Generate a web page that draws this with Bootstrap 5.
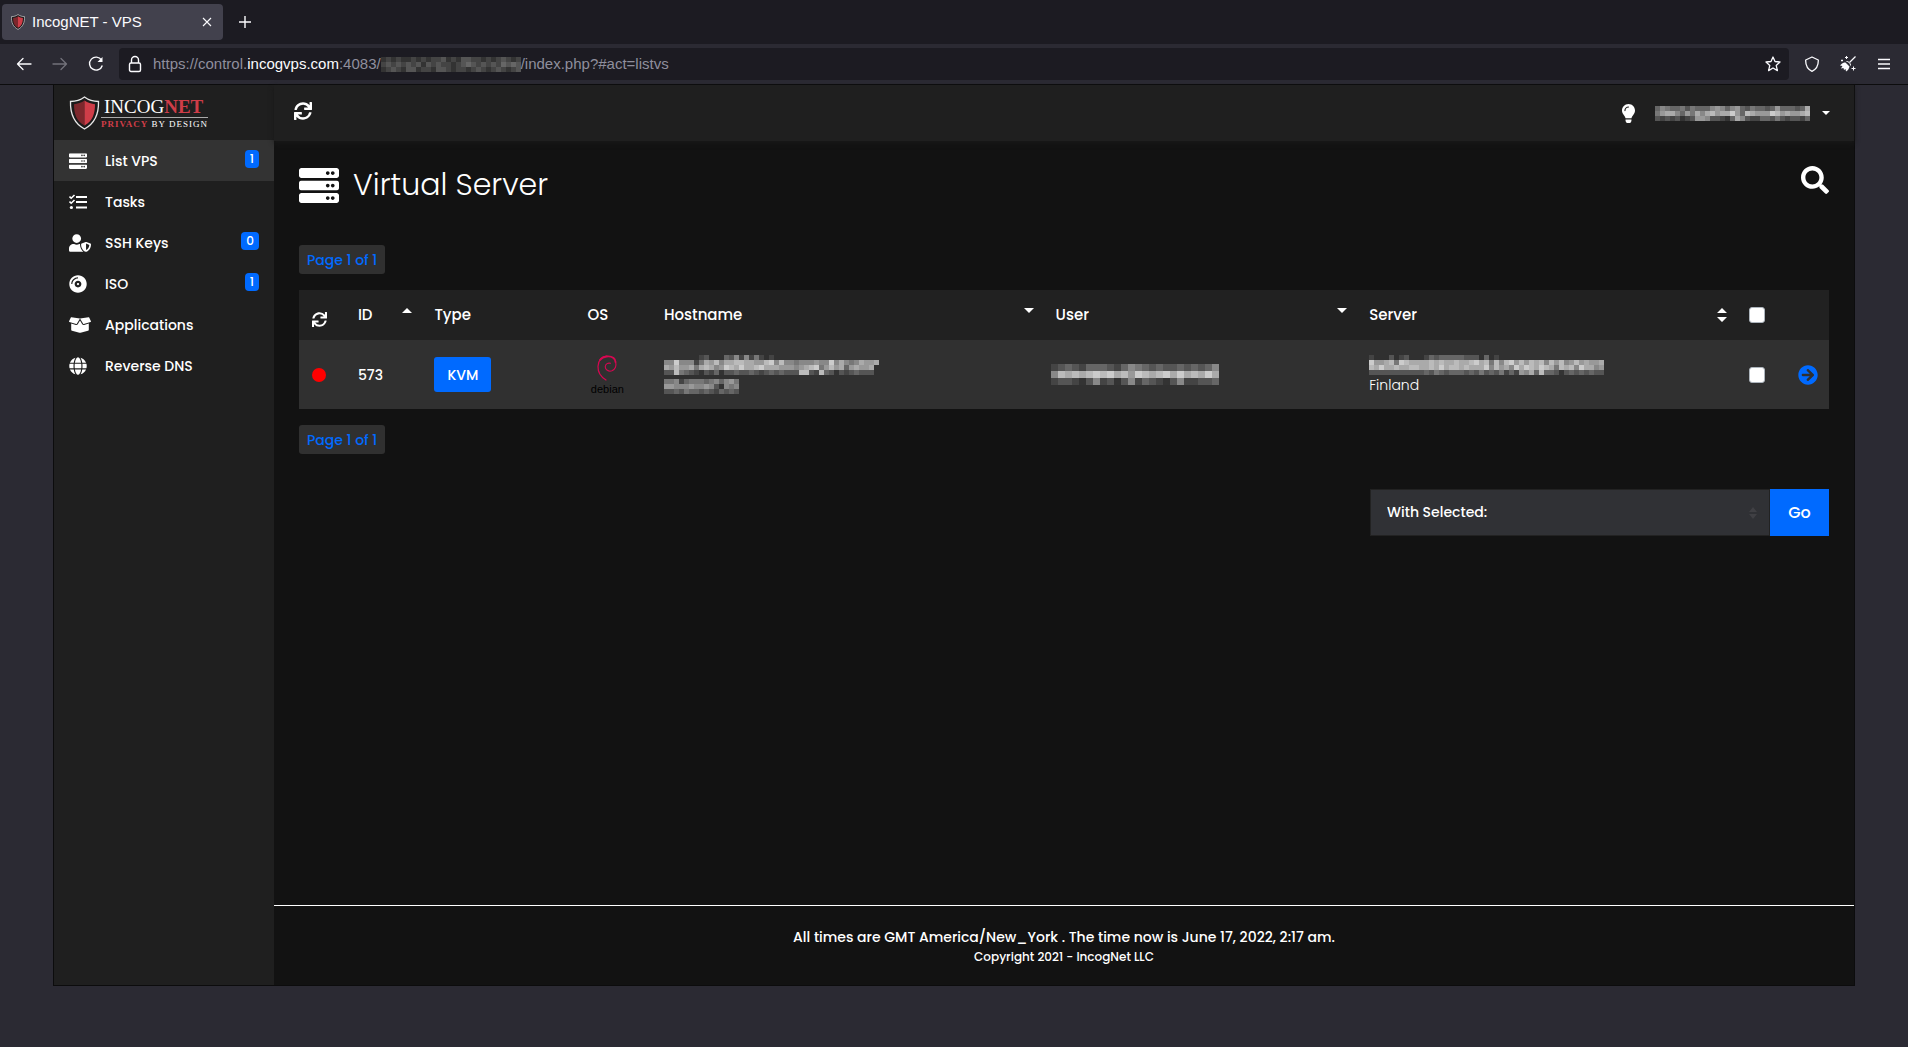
<!DOCTYPE html>
<html lang="en">
<head>
<meta charset="utf-8">
<meta name="viewport" content="width=device-width, initial-scale=1">
<title>IncogNET - VPS</title>
<link rel="stylesheet" href="https://cdn.jsdelivr.net/npm/bootstrap@5.3.0/dist/css/bootstrap.min.css">
<style>
:root { --accent: #006aff; --chrome: #2b2a33; --chrome-dark: #1c1b22; }
body { background: var(--chrome); color: #fff; font-family: Poppins, Inter, sans-serif; font-size: 14px; font-weight: 500; line-height: 20px; }
button { color: inherit; font-weight: inherit; }
svg { display: block; flex: none; }
.icon-btn { background: none; border: 0; padding: 0; display: block; color: inherit; }

/* browser frame */
.browser-ui { font-family: "Liberation Sans", Arial, sans-serif; font-size: 15px; font-weight: 400; color: #fbfbfe; }
.tab-strip { background: var(--chrome-dark); height: 44px; padding-left: 2px; }
.browser-tab { background: #42414d; width: 221px; height: 36px; border-radius: 4px; padding: 0 11px 0 9px; gap: 7px; }
.toolbar { height: 41px; padding: 0 16px; border-bottom: 1px solid #0c0c0d; }
.nav-keys { gap: 20px; width: 103px; }
.url-box { background: var(--chrome-dark); height: 32px; border-radius: 4px; padding: 0 8px 0 9px; }
.url-text { color: #8f8f9d; margin-left: 11px; }
.url-text b { color: #fbfbfe; font-weight: 400; }
.tool-keys { gap: 20px; margin-left: 15px; }

/* application frame */
.app { margin: 0 53px 61px; border: 1px solid #0c0c0d; border-top: 0; background: #121212; }
.side { width: 220px; background: #1f1f1f; }
.brand { height: 55px; padding: 11px 15px 0; gap: 1px; font-family: "Liberation Serif", serif; color: #fff; text-decoration: none; }
.brand-name { font-size: 19px; line-height: 21px; padding-left: 3px; font-weight: 400; border-bottom: 1px solid #aaa; }
.brand-name b, .brand-tag b { color: #cf3d48; }
.brand-tag { font-size: 9px; line-height: 13px; letter-spacing: 1px; font-weight: 400; white-space: nowrap; }
.side-link { height: 41px; padding: 0 15px; color: #fff; text-decoration: none; }
.side-link.active { background: #333; }
.side-icon { width: 36px; }
.side-link .badge { background: var(--accent); font-size: 12px; line-height: 12px; font-weight: 500; padding: 3px 5px; border-radius: 4px; margin-bottom: 4px; }
.topbar { height: 56px; background: #1f1f1f; box-shadow: 0 2px 5px #191919; padding: 0 24px 0 20px; gap: 20px; }
.account { gap: 12px; }
.page-area { padding: 25px 25px 0; }
h1 { font-size: 30px; font-weight: 300; line-height: 38px; gap: 14px; }
.page-pill { background: #303030; color: var(--accent); border: 0; border-radius: 3px; height: 29px; padding: 0 8px; }
.page-head { margin-bottom: 41px; }
.vps { margin: 16px 0; table-layout: fixed; width: 100%; }
.vps th { background: #212121; height: 50px; padding: 0 9px 0 13px; font-weight: 500; font-size: 15px; }
.vps td { background: #303030; height: 69px; padding: 0 8px 0 13px; }
.sort { width: 10px; height: 16px; fill: #fff; }
.kvm { background: var(--accent); border-radius: 3px; border: 0; height: 35px; padding: 0 13px; }
.dot { width: 14px; height: 14px; border-radius: 50%; background: red; }
.distro { width: 40px; font: 11px/12px "Liberation Sans", sans-serif; color: #000; }
.place { font-weight: 300; line-height: 20px; }
.form-check-input.tick { display: block; float: none; width: 16px; height: 16px; margin: 0; background-color: #fff; border: 1px solid #adb5bd; border-radius: 3px; }
.bulk { width: 459px; margin-top: 35px; }
.bulk .form-select { height: 47px; background-color: #303135; border: 1px solid #222; color: #fff; font-size: 14px; font-weight: 500; padding: 0 16px; background-position: right 12px center; background-size: 8px 12px; background-image: url("data:image/svg+xml,%3Csvg xmlns='http://www.w3.org/2000/svg' viewBox='0 0 8 12'%3E%3Cpath fill='%23404044' d='M0 5l4-5 4 5zM0 7h8l-4 5z'/%3E%3C/svg%3E"); }
.go { flex: 0 0 59px; background: var(--accent); border: 0; font-size: 16px; }
.foot { border-top: 1px solid #fff; height: 80px; padding-top: 21px; }
.foot .fine { font-size: 12px; }
.foot .clock { font-size: 14px; }
</style>
<script src="https://cdn.jsdelivr.net/npm/bootstrap@5.3.0/dist/js/bootstrap.bundle.min.js"></script>
</head>
<body class="min-vh-100 d-flex flex-column">

<svg width="0" height="0" class="position-absolute" aria-hidden="true">
  <symbol id="sync" viewBox="0 0 512 512"><path d="M440.65 12.57l4 82.77A247.16 247.16 0 0 0 255.83 8C134.73 8 33.91 94.92 12.29 209.82A12 12 0 0 0 24.09 224h49.05a12 12 0 0 0 11.67-9.26 175.91 175.91 0 0 1 317-56.94l-101.46-4.86a12 12 0 0 0-12.57 12v47.41a12 12 0 0 0 12 12H500a12 12 0 0 0 12-12V12a12 12 0 0 0-12-12h-47.37a12 12 0 0 0-11.98 12.57zM255.83 432a175.61 175.61 0 0 1-146-77.8l101.8 4.87a12 12 0 0 0 12.57-12v-47.4a12 12 0 0 0-12-12H12a12 12 0 0 0-12 12V500a12 12 0 0 0 12 12h47.35a12 12 0 0 0 12-12.6l-4.15-82.57A247.17 247.17 0 0 0 255.83 504c121.11 0 221.93-86.92 243.55-201.82a12 12 0 0 0-11.8-14.18h-49.05a12 12 0 0 0-11.67 9.26A175.86 175.86 0 0 1 255.83 432z"/></symbol>
  <symbol id="unit" viewBox="0 0 512 128"><path d="M480 128H32c-17.673 0-32-14.327-32-32V32C0 14.327 14.327 0 32 0h448c17.673 0 32 14.327 32 32v64c0 17.673-14.327 32-32 32zm-48-88c-13.255 0-24 10.745-24 24s10.745 24 24 24 24-10.745 24-24-10.745-24-24-24zm-64 0c-13.255 0-24 10.745-24 24s10.745 24 24 24 24-10.745 24-24-10.745-24-24-24z"/></symbol>
  <symbol id="server" viewBox="0 0 512 448"><use href="#unit" width="512" height="128"/><use href="#unit" y="160" width="512" height="128"/><use href="#unit" y="320" width="512" height="128"/></symbol>
  <symbol id="shield" viewBox="0 0 30 34"><path d="M15 1C11 4 6 5.500 1 5.500C.6 18 4 27 15 33C26 27 29.400 18 29 5.500C24 5.500 19 4 15 1Z" fill="#1b1b1b" stroke="#e8e8e8" stroke-width="1.300"/><path d="M15 4.500C12 6.700 8 8 4.500 8.200C4.500 18 7 25 15 29.500Z" fill="#7d272c"/><path d="M15 4.500C18 6.700 22 8 25.500 8.200C25.500 18 23 25 15 29.500Z" fill="#cf3d48"/></symbol>
</svg>

<header class="browser-ui">
  <div class="tab-strip d-flex align-items-center">
    <div class="browser-tab d-flex align-items-center">
      <svg width="14" height="16"><use href="#shield"/></svg>
      <span class="flex-grow-1">IncogNET - VPS</span>
      <button class="icon-btn" aria-label="Close tab"><svg width="10" height="10" viewBox="0 0 10 10" stroke="currentColor" stroke-width="1.100"><path d="M1 1l8 8M9 1L1 9"/></svg></button>
    </div>
    <button class="icon-btn ms-3" aria-label="New tab"><svg width="12" height="12" viewBox="0 0 12 12" stroke="currentColor" stroke-width="1.400"><path d="M6 0v12M0 6h12"/></svg></button>
  </div>
  <div class="toolbar d-flex align-items-center">
    <div class="nav-keys d-flex align-items-center">
      <button class="icon-btn" aria-label="Back"><svg width="16" height="14" viewBox="0 0 16 14" fill="none" stroke="currentColor" stroke-width="1.300" stroke-linecap="round" stroke-linejoin="round"><path d="M15 7H1.500M7 1.500L1.500 7L7 12.500"/></svg></button>
      <button class="icon-btn" aria-label="Forward"><svg width="16" height="14" viewBox="0 0 16 14" fill="none" stroke="#73727b" stroke-width="1.300" stroke-linecap="round" stroke-linejoin="round"><path d="M1 7h13.500M9 1.500L14.500 7L9 12.500"/></svg></button>
      <button class="icon-btn" aria-label="Reload"><svg width="16" height="16" viewBox="0 0 16 16" fill="none" stroke="currentColor" stroke-width="1.400"><path d="M13.500 4A6.500 6.500 0 1 0 14.300 9.500"/><path d="M14.500 1v5h-5z" fill="currentColor" stroke="none"/></svg></button>
    </div>
    <div class="url-box d-flex align-items-center flex-grow-1">
      <svg width="14" height="18" viewBox="0 0 14 18" fill="none" stroke="currentColor" stroke-width="1.400"><rect x="1.500" y="8" width="11" height="8.500" rx="1.500"/><path d="M3.500 8V5a3.500 3.500 0 0 1 7 0v3"/></svg>
      <span class="url-text d-flex align-items-center flex-grow-1"><span>https://control.<b>incogvps.com</b>:4083/</span><svg class="mosaic" data-cell="5" data-rows="3434334343445343554434345434 4545454535454434565454546565 3454355344355434434543454345"></svg><span>/index.php?#act=listvs</span></span>
      <button class="icon-btn" aria-label="Bookmark"><svg width="16" height="16" viewBox="0 0 16 16" fill="none" stroke="currentColor" stroke-width="1.300" stroke-linejoin="round"><path d="M8 1l2 4.500l5 .5l-3.800 3.400l1.200 5.200L8 12l-4.400 2.600l1.200-5.200L1 6l5-.500z"/></svg></button>
    </div>
    <div class="tool-keys d-flex align-items-center">
      <button class="icon-btn" aria-label="Shield"><svg width="16" height="16" viewBox="0 0 16 16" fill="none" stroke="currentColor" stroke-width="1.300" stroke-linejoin="round"><path d="M8 1L14.300 4C14.500 9 13 13 8 15.300C3 13 1.500 9 1.700 4Z"/></svg></button>
      <button class="icon-btn" aria-label="Clean"><svg width="16" height="16" viewBox="0 0 16 16"><path d="M15.500.500L9.500 6.500" stroke="currentColor" stroke-width="1.300"/><path d="M6.500 5.500C8 5 11 7.500 10.500 9.500" stroke="currentColor" fill="none"/><path d="M5.500 6.500L9.500 10.500C9 13 7.500 15 6 15.500L5.500 13L4 14L3.500 12L1 12.500L2.500 10L0 9.500C2 7 4 6.500 5.500 6.500Z" fill="currentColor"/><path d="M6.500 0v3M5 1.500h3M13.500 10.500v4M11.500 12.500h4M2 3.500v2M1 4.500h2" stroke="currentColor"/></svg></button>
      <button class="icon-btn" aria-label="Menu"><svg width="16" height="16" viewBox="0 0 16 16" stroke="currentColor" stroke-width="1.300"><path d="M2 3.500h12M2 8h12M2 12.500h12"/></svg></button>
    </div>
  </div>
</header>

<div class="app d-flex flex-grow-1">
  <aside class="side flex-shrink-0">
    <a class="brand d-flex" href="#">
      <svg width="31" height="34"><use href="#shield" width="31" height="34"/></svg>
      <span><span class="brand-name d-block">INCOG<b>NET</b></span><span class="brand-tag d-block"><b>PRIVACY</b> BY DESIGN</span></span>
    </a>
    <nav class="nav flex-column flex-nowrap">
      <a class="side-link active d-flex align-items-center" href="#"><span class="side-icon"><svg width="18" height="16" fill="#fff"><use href="#server"/></svg></span><span class="flex-grow-1">List VPS</span><span class="badge">1</span></a>
      <a class="side-link d-flex align-items-center" href="#"><span class="side-icon"><svg width="18" height="16" viewBox="0 0 18 16" fill="none" stroke="#fff"><path d="M7 3h11M7 8h11M7 13.500h11" stroke-width="2"/><path d="M.5 2.500l1.700 1.700L5.500 1M.5 7.500l1.700 1.700L5.500 6" stroke-width="1.600"/><circle cx="2.400" cy="13.500" r="1.600" fill="#fff" stroke="none"/></svg></span><span>Tasks</span></a>
      <a class="side-link d-flex align-items-center" href="#"><span class="side-icon"><svg width="22" height="18" viewBox="0 0 640 512" fill="#fff"><path d="M622.300 271.100l-115.200-45c-4.100-1.600-12.600-3.700-22.200 0l-115.200 45c-10.700 4.200-17.700 14-17.700 24.900 0 111.600 68.700 188.800 132.900 213.900 9.600 3.700 18 1.600 22.200 0C558.400 489.900 640 420.500 640 296c0-10.900-7-20.700-17.700-24.900zM496 462.400V273.300l95.500 37.300c-5.600 87.100-60.900 135.400-95.500 151.800zM224 256c70.700 0 128-57.300 128-128S294.700 0 224 0 96 57.300 96 128s57.300 128 128 128zm96 40c0-2.500.8-4.800 1.100-7.200-2.500-.1-4.900-.8-7.500-.8h-16.700c-22.200 10.200-46.900 16-72.900 16s-50.600-5.800-72.900-16h-16.700C60.200 288 0 348.200 0 422.400V464c0 26.500 21.500 48 48 48h352c6.800 0 13.300-1.500 19.200-4-54-42.900-99.200-116.700-99.200-212z"/></svg></span><span class="flex-grow-1">SSH Keys</span><span class="badge">0</span></a>
      <a class="side-link d-flex align-items-center" href="#"><span class="side-icon"><svg width="18" height="18" viewBox="0 0 496 512" fill="#fff"><path d="M248 8C111 8 0 119 0 256s111 248 248 248 248-111 248-248S385 8 248 8zM88 256H56c0-105.900 86.100-192 192-192v32c-88.200 0-160 71.800-160 160zm160 96c-53 0-96-43-96-96s43-96 96-96 96 43 96 96-43 96-96 96zm0-128c-17.700 0-32 14.300-32 32s14.300 32 32 32 32-14.300 32-32-14.300-32-32-32z"/></svg></span><span class="flex-grow-1">ISO</span><span class="badge">1</span></a>
      <a class="side-link d-flex align-items-center" href="#"><span class="side-icon"><svg width="22" height="18" viewBox="0 0 640 512" fill="#fff"><path d="M425.700 256c-16.900 0-32.800-9-41.400-23.400L320 126l-64.200 106.600c-8.700 14.500-24.600 23.500-41.500 23.500-4.500 0-9-.6-13.300-1.900L64 215v178c0 14.700 10 27.500 24.200 31l216.200 54.100c10.200 2.500 20.900 2.500 31 0L551.800 424c14.200-3.600 24.200-16.400 24.200-31V215l-137 39.100c-4.300 1.300-8.800 1.900-13.300 1.900zm212.600-112.200L586.800 41c-3.100-6.200-9.800-9.800-16.700-8.900L320 64l91.700 152.100c3.800 6.300 11.400 9.300 18.500 7.300l197.900-56.500c9.900-2.900 14.700-13.900 10.200-23.100zM53.200 41L1.700 143.800c-4.600 9.200.3 20.200 10.100 23l197.900 56.500c7.100 2 14.700-1 18.500-7.300L320 64 69.800 32.100c-6.900-.8-13.500 2.700-16.600 8.900z"/></svg></span><span>Applications</span></a>
      <a class="side-link d-flex align-items-center" href="#"><span class="side-icon"><svg width="18" height="18" viewBox="0 0 496 512" fill="#fff"><path d="M336.500 160C322 70.700 287.800 8 248 8s-74 62.700-88.500 152h177zM152 256c0 22.200 1.200 43.500 3.300 64h185.300c2.100-20.500 3.300-41.800 3.300-64s-1.200-43.500-3.300-64H155.300c-2.100 20.500-3.300 41.800-3.300 64zm324.700-96c-28.600-67.900-86.500-120.400-158-141.600 24.400 33.800 41.200 84.700 50 141.600h108zM177.200 18.400C105.800 39.600 47.800 92.100 19.300 160h108c8.700-56.900 25.500-107.800 49.900-141.600zM487.400 192H372.700c2.100 21 3.300 42.500 3.300 64s-1.200 43-3.300 64h114.600c5.500-20.500 8.600-41.800 8.600-64s-3.100-43.500-8.500-64zM120 256c0-21.500 1.200-43 3.300-64H8.600C3.200 212.500 0 233.800 0 256s3.200 43.500 8.600 64h114.600c-2-21-3.200-42.500-3.200-64zm39.500 96c14.500 89.300 48.700 152 88.500 152s74-62.700 88.500-152h-177zm159.300 141.600c71.400-21.200 129.400-73.700 158-141.600h-108c-8.800 56.900-25.600 107.800-50 141.600zM19.300 352c28.600 67.900 86.500 120.400 158 141.600-24.400-33.800-41.200-84.700-50-141.600h-108z"/></svg></span><span>Reverse DNS</span></a>
    </nav>
  </aside>

  <div class="d-flex flex-column flex-grow-1">
    <div class="topbar d-flex align-items-center">
      <button class="icon-btn me-auto pb-1" aria-label="Refresh"><svg width="18" height="18" fill="#fff"><use href="#sync"/></svg></button>
      <button class="icon-btn" aria-label="Theme"><svg width="13" height="19" viewBox="0 0 352 512" fill="#fff"><path d="M96.060 454.350c.01 6.290 1.870 12.450 5.360 17.690l17.090 25.690a31.990 31.990 0 0 0 26.640 14.280h61.710a31.990 31.990 0 0 0 26.640-14.280l17.090-25.690a31.989 31.989 0 0 0 5.360-17.690l.04-38.350H96.010l.05 38.350zM0 176c0 44.370 16.450 84.850 43.560 115.780 16.520 18.850 42.360 58.230 52.210 91.450.04.26.07.52.11.78h160.240c.04-.26.07-.51.11-.78 9.850-33.220 35.690-72.600 52.210-91.450C335.550 260.850 352 220.370 352 176 352 78.610 272.910-.3 175.450 0 73.440.31 0 82.970 0 176zm176-80c-44.110 0-80 35.890-80 80 0 8.840-7.160 16-16 16s-16-7.160-16-16c0-61.760 50.240-112 112-112 8.840 0 16 7.160 16 16s-7.160 16-16 16z"/></svg></button>
      <button class="account icon-btn d-flex align-items-center" aria-label="Account"><svg class="mosaic" data-cell="5" data-rows="687667576668986896576656966656a 79aa8697a8ab9aac96ba999cb9a99ab 5454534599855436a85446657545546"></svg><svg width="8" height="5" viewBox="0 0 8 5" fill="#fff"><path d="M0 0h8L4 4z"/></svg></button>
    </div>

    <main class="page-area flex-grow-1">
      <div class="page-head d-flex align-items-start">
        <h1 class="d-flex align-items-center mb-0 me-auto"><svg width="40" height="35" fill="#fff"><use href="#server"/></svg>Virtual Server</h1>
        <button class="icon-btn" aria-label="Search"><svg width="28" height="28" viewBox="0 0 512 512" fill="#fff"><path d="M505 442.700L405.300 343c-4.500-4.500-10.600-7-17-7H372c27.600-35.300 44-79.700 44-128C416 93.100 322.900 0 208 0S0 93.100 0 208s93.100 208 208 208c48.300 0 92.700-16.400 128-44v16.300c0 6.400 2.500 12.500 7 17l99.700 99.700c9.400 9.400 24.600 9.400 33.900 0l28.300-28.300c9.400-9.400 9.400-24.600.1-34zM208 336c-70.700 0-128-57.200-128-128 0-70.700 57.200-128 128-128 70.700 0 128 57.200 128 128 0 70.700-57.200 128-128 128z"/></svg></button>
      </div>
      <button class="page-pill d-block">Page 1 of 1</button>

      <table class="vps align-middle">
        <colgroup><col style="width:3%"><col style="width:5%"><col style="width:10%"><col style="width:5%"><col style="width:25.6%"><col style="width:20.5%"><col style="width:24.8%"><col style="width:3.2%"><col style="width:2.9%"></colgroup>
        <thead>
          <tr>
            <th scope="col"><button class="icon-btn pt-2" aria-label="Reload list"><svg width="15" height="15" fill="#fff"><use href="#sync"/></svg></button></th>
            <th scope="col"><span class="d-flex align-items-center justify-content-between">ID<svg class="sort" viewBox="0 0 10 16"><path d="M0 6l5-5 5 5z"/></svg></span></th>
            <th scope="col">Type</th>
            <th scope="col">OS</th>
            <th scope="col"><span class="d-flex align-items-center justify-content-between">Hostname<svg class="sort" viewBox="0 0 10 16"><path d="M0 1h10L5 6z"/></svg></span></th>
            <th scope="col"><span class="d-flex align-items-center justify-content-between">User<svg class="sort" viewBox="0 0 10 16"><path d="M0 1h10L5 6z"/></svg></span></th>
            <th scope="col"><span class="d-flex align-items-center justify-content-between">Server<svg class="sort" viewBox="0 0 10 16"><path d="M0 6l5-5 5 5zM0 10h10l-5 5z"/></svg></span></th>
            <th scope="col"><input class="form-check-input tick" type="checkbox" aria-label="Select all"></th>
            <th></th>
          </tr>
        </thead>
        <tbody>
          <tr>
            <td><div class="dot"></div></td>
            <td>573</td>
            <td><button class="kvm">KVM</button></td>
            <td><div class="distro d-flex flex-column align-items-center"><svg width="20" height="28" viewBox="0 0 20 28" fill="none" stroke="#d70751" stroke-linecap="round"><path d="M9 25C4 22 .8 17 1 11.500C1.200 5 5 1.200 10 1.200" stroke-width="1.200"/><path d="M3 5C6 1 13 .3 16.500 3C18 4.200 18.500 5 18.500 7" stroke-width="1.900"/><path d="M18.500 7C19.800 11 18 14.500 15 15.800C11.500 17.200 8 14.500 8.300 11.500C8.600 8.800 11 7.600 13.500 8.300" stroke-width="1.100"/></svg><span>debian</span></div></td>
            <td><svg class="mosaic mb-1" data-cell="5" data-rows=".......45...65848474.4.................... 88c88847a9b8aabbaa99bc8b887888988c8a878a99a a9b99a7aba89cbacaabcaaa99989abc79b9a69a99a 55b765435463556556545656555bb54b6535456555"></svg><svg class="mosaic" data-cell="5" data-rows="778467776786897 998889889853878 556576656546565"></svg></td>
            <td class="ps-2"><svg class="mosaic" data-cell="7" data-rows="456546665468765655656568 8bababcbcab9cbabcacabaca 455435845358465435844556"></svg></td>
            <td><svg class="mosaic" data-cell="5" data-rows="4...5.45...46566666555.6.4............. c99ab7cbaaaababaabaabcab7b8bc9b9bab8b9b89b9a99a bacaabaabbaabacabbabaaac8b9a8cacbacba7bab8caa89 55555555555657656665657565746498a6b665356565655"></svg><div class="place">Finland</div></td>
            <td><input class="form-check-input tick" type="checkbox" aria-label="Select server 573"></td>
            <td><a href="#" aria-label="Open server"><svg width="20" height="20" viewBox="0 0 512 512" fill="#006aff"><path d="M256 8c137 0 248 111 248 248S393 504 256 504 8 393 8 256 119 8 256 8zm-28.900 143.600l75.500 72.400H120c-13.300 0-24 10.700-24 24v16c0 13.300 10.700 24 24 24h182.600l-75.500 72.400c-9.700 9.300-9.900 24.800-.4 34.300l11 10.900c9.400 9.400 24.600 9.400 33.900 0L404.300 273c9.400-9.400 9.400-24.600 0-33.900L271.600 106.300c-9.400-9.400-24.600-9.400-33.900 0l-11 10.900c-9.500 9.600-9.300 25.100.4 34.400z"/></svg></a></td>
          </tr>
        </tbody>
      </table>

      <button class="page-pill d-block">Page 1 of 1</button>

      <div class="bulk d-flex ms-auto">
        <select class="form-select rounded-0" aria-label="With selected"><option>With Selected:</option></select>
        <button class="go">Go</button>
      </div>
    </main>

    <footer class="foot text-center">
      <div class="clock">All times are GMT America/New_York . The time now is June 17, 2022, 2:17 am.</div>
      <div class="fine">Copyright 2021 - IncogNet LLC</div>
    </footer>
  </div>
</div>

<script>
// Masked strings: every hex digit is the grey level of one cell, a dot is an empty cell.
document.querySelectorAll('.mosaic').forEach(function (svg) {
  var rows = svg.dataset.rows.split(' '), c = +svg.dataset.cell, cols = 0, out = '';
  rows.forEach(function (row, y) {
    cols = Math.max(cols, row.length);
    row.split('').forEach(function (d, x) {
      if (d !== '.') out += '<rect x="' + x * c + '" y="' + y * c + '" width="' + c + '" height="' + c + '" fill="#' + d + d + d + '"/>';
    });
  });
  svg.setAttribute('width', cols * c);
  svg.setAttribute('height', rows.length * c);
  svg.innerHTML = out;
});
</script>
</body>
</html>
